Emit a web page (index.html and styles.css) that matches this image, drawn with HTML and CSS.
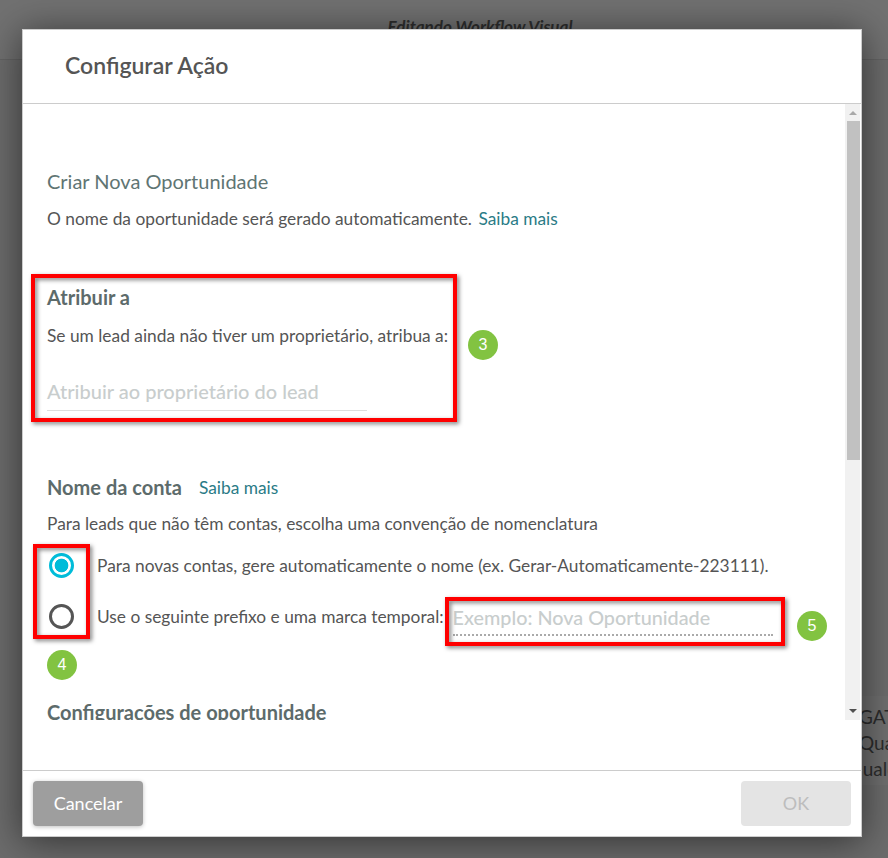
FILE: index.html
```html
<!DOCTYPE html>
<html lang="pt-BR">
<head>
<meta charset="utf-8">
<title>Configurar Ação</title>
<link rel="stylesheet" href="styles.css">
</head>
<body>
<div class="page">
  <header class="page-bar"><span class="page-title">Editando Workflow Visual</span></header>
  <div class="page-side">
    <p>GATILHO</p>
    <p>Quando</p>
    <p class="tail">qualquer</p>
  </div>
</div>
<div class="modal">
  <div class="modal-header"><h1>Configurar Ação</h1></div>
  <div class="modal-body">
    <div class="content">
      <h2 class="action-name">Criar Nova Oportunidade</h2>
      <p class="line first-line">O nome da oportunidade será gerado automaticamente. <a class="more">Saiba mais</a></p>
      <h3 class="sec assign">Atribuir a</h3>
      <p class="line assign-text">Se um lead ainda não tiver um proprietário, atribua a:</p>
      <div class="select">Atribuir ao proprietário do lead</div>
      <div class="account-head"><h3 class="sec">Nome da conta</h3><a class="more">Saiba mais</a></div>
      <p class="line account-text">Para leads que não têm contas, escolha uma convenção de nomenclatura</p>
      <div class="radio-row first">
        <span class="radio on"></span>
        <span class="line nudge">Para novas contas, gere automaticamente o nome (ex. Gerar-Automaticamente-223111).</span>
      </div>
      <div class="radio-row second">
        <span class="radio"></span>
        <span class="line nudge">Use o seguinte prefixo e uma marca temporal:</span>
        <span class="prefix">Exemplo: Nova Oportunidade</span>
      </div>
      <h3 class="sec settings">Configurações de oportunidade</h3>
    </div>
    <div class="scrollbar">
      <span class="arrow up"></span>
      <span class="thumb"></span>
      <span class="arrow down"></span>
    </div>
  </div>
  <div class="modal-gap"></div>
  <div class="modal-footer">
    <button class="btn cancel">Cancelar</button>
    <button class="btn ok">OK</button>
  </div>
</div>
<div class="mark box-a"></div>
<div class="mark box-b"></div>
<div class="mark box-c"></div>
<div class="badge badge-3">3</div>
<div class="badge badge-4">4</div>
<div class="badge badge-5">5</div>
</body>
</html>
```
FILE: styles.css
```css
* { box-sizing: border-box; }
html, body { margin: 0; height: 100%; }
body {
  width: 888px;
  height: 858px;
  overflow: hidden;
  position: relative;
  font-family: Lato, "Liberation Sans", sans-serif;
  background: #6c6c6c;
}
.page { height: 100%; display: flex; flex-direction: column; }
.page-bar {
  height: 60px;
  background: #717171;
  border-bottom: 1px solid #646464;
  text-align: center;
  padding: 16px 0 0 72px;
}
.page-title { font-style: italic; font-weight: 700; font-size: 17px; color: #2e2e2e; }
.page-side {
  margin: 636px 0 0 862px;
  height: 89px;
  padding: 8px 0 0 0;
  background: #6f6f6f;
  color: #2c2c2c;
  font-size: 19px;
  line-height: 26px;
  white-space: nowrap;
  overflow: hidden;
}
.page-side p { margin: 0 0 0 -3px; }
.page-side p.tail { margin-left: -10px; }
.modal {
  position: absolute;
  left: 22px;
  top: 29px;
  width: 840px;
  height: 808px;
  background: #fff;
  border: 1px solid #ccc;
  display: flex;
  flex-direction: column;
  box-shadow: 0 4px 36px rgba(0, 0, 0, .55);
}
.modal-header {
  height: 74px;
  flex: none;
  border-bottom: 1px solid #ccc;
  padding: 21px 0 0 42px;
}
.modal-header h1 { margin: 0; font-size: 23px; line-height: 28px; font-weight: 600; color: #555; }
.modal-body { height: 616px; flex: none; display: flex; overflow: hidden; }
.content { flex: 1; padding: 65px 0 0 24px; overflow: hidden; }
.action-name { margin: 0; font-size: 20px; line-height: 24px; font-weight: 400; color: #5f7573; }
.line { font-size: 17.33px; line-height: 22px; color: #555; margin: 0; }
p.line { margin-top: 14px; }
p.first-line { margin-top: 15px; }
.nudge { padding-top: 2px; }
.more { color: #2a7b86; font-size: 17.33px; margin-left: 2px; }
.sec { margin: 0; font-size: 20px; line-height: 24px; font-weight: 700; color: #5d6b6b; }
.assign { margin-top: 55px; }
p.assign-text { margin-top: 16px; }
.select {
  width: 320px;
  height: 40px;
  margin-top: 24px;
  padding-top: 7px;
  border-bottom: 1px solid #ddd;
  font-size: 20px;
  line-height: 26px;
  font-weight: 500;
  color: #c8cdcd;
}
.account-head { display: flex; align-items: center; gap: 16px; margin-top: 64px; }
.account-head .more { margin-left: 1px; }
p.account-text { margin-top: 14px; }
.radio-row { display: flex; align-items: center; }
.radio-row.first { margin-top: 17px; height: 26px; }
.radio-row.second { margin-top: 25px; height: 26px; }
.radio {
  width: 25px;
  height: 25px;
  margin: 0 23px 0 2px;
  flex: none;
  border-radius: 50%;
  border: 3px solid #555;
  background: #fff;
}
.radio.on {
  border-color: #00bcd9;
  background: radial-gradient(circle, #00bcd9 0 6.5px, #fff 7.2px);
}
.prefix {
  margin-left: 9px;
  width: 320px;
  height: 36px;
  padding-top: 4px;
  border-bottom: 2px dotted #aaa;
  font-size: 19.8px;
  font-weight: 500;
  line-height: 26px;
  color: #c8cdcd;
  margin-top: 4px;
}
.settings { margin-top: 71px; }
.scrollbar {
  width: 16px;
  flex: none;
  background: #f1f1f1;
  position: relative;
  border-right: 1px solid #fff;
}
.thumb {
  position: absolute;
  left: 2px;
  top: 17px;
  width: 13px;
  height: 339px;
  background: #c1c1c1;
}
.arrow {
  position: absolute;
  left: 4px;
  width: 0;
  height: 0;
  border-left: 4px solid transparent;
  border-right: 4px solid transparent;
}
.arrow.up { top: 7px; border-bottom: 4px solid #a8a8a8; }
.arrow.down { bottom: 7px; border-top: 4px solid #505050; }
.modal-gap { flex: 1; }
.modal-footer {
  height: 66px;
  flex: none;
  border-top: 1px solid #ccc;
  padding: 10px 10px 0;
  display: flex;
  justify-content: space-between;
  align-items: flex-start;
}
.btn {
  width: 110px;
  height: 45px;
  border: 0;
  border-radius: 4px;
  font-family: inherit;
  font-size: 18px;
  padding-bottom: 3px;
}
.cancel { background: #9e9e9e; color: #fff; box-shadow: 0 1px 4px rgba(0, 0, 0, .25); }
.ok { background: #e4e4e4; color: #bdbdbd; }
.mark {
  position: absolute;
  border: 4px solid #f00;
  filter: drop-shadow(2px 2px 2px rgba(0, 0, 0, .5));
}
.box-a { left: 31px; top: 274px; width: 426px; height: 148px; }
.box-b { left: 33px; top: 544px; width: 57px; height: 95px; }
.box-c { left: 445px; top: 597px; width: 340px; height: 49px; }
.badge {
  position: absolute;
  width: 30px;
  height: 30px;
  border-radius: 50%;
  background: #82c341;
  color: #fff;
  font-family: "Liberation Sans", sans-serif;
  font-size: 16px;
  line-height: 30px;
  text-align: center;
}
.badge-3 { left: 468px; top: 330px; }
.badge-4 { left: 47px; top: 650px; }
.badge-5 { left: 797px; top: 611px; }
```
